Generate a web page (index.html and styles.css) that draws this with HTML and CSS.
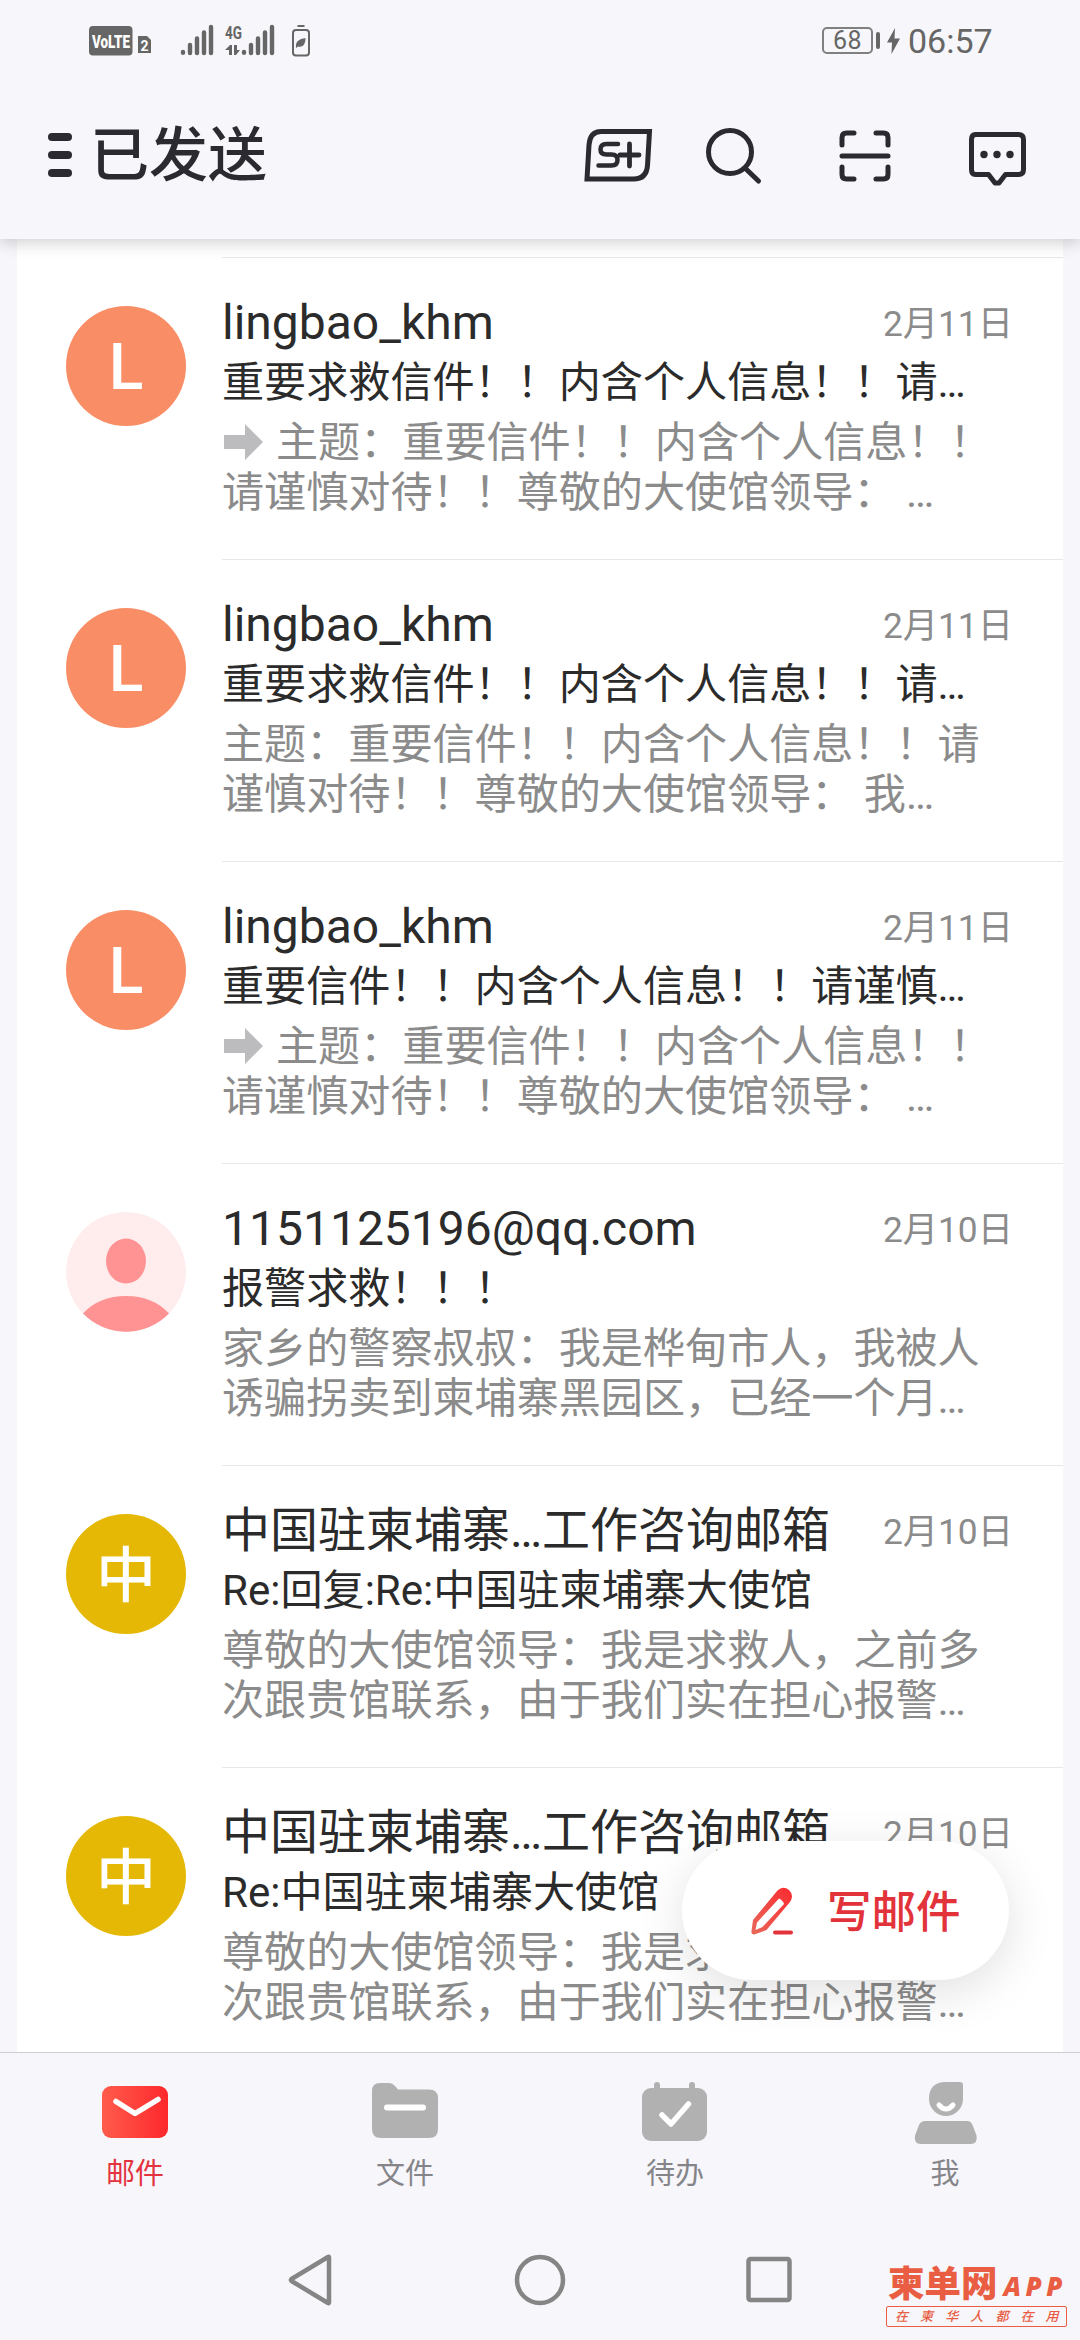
FILE: index.html
```html
<!DOCTYPE html>
<html lang="zh-CN">
<head>
<meta charset="utf-8">
<title>已发送</title>
<link rel="stylesheet" href="styles.css">
</head>
<body>
<div class="screen">
  <div class="status">
    <svg class="status-left" width="230" height="80" viewBox="80 0 230 80">
      <rect x="89" y="26" width="43.500" height="29.500" rx="4" fill="#666"/>
      <text x="92" y="48" class="volte" textLength="38" lengthAdjust="spacingAndGlyphs">VoLTE</text>
      <path d="M138 36h9l4 4v13h-13z" fill="#666"/>
      <text x="140.500" y="51" class="sim" textLength="8" lengthAdjust="spacingAndGlyphs">2</text>
      <g stroke="#666" stroke-width="4.400" stroke-linecap="round">
        <path d="M183 52v.8M190 45v8M197 38.500v14.500M204 32.500v20.500M211 27v26"/>
        <path d="M244 52v.8M251 45v8M258 38.500v14.500M265 32.500v20.500M272 27v26"/>
      </g>
      <text x="225" y="38.500" class="net" textLength="17" lengthAdjust="spacingAndGlyphs">4G</text>
      <path d="M225 50l5-5h2v10h-3v-5zM234 45h3v5h3l-4 5h-2z" fill="#666"/>
      <rect x="293" y="30" width="16" height="25.500" rx="3" fill="none" stroke="#666" stroke-width="2"/>
      <path d="M297.500 26h7" stroke="#666" stroke-width="2"/>
      <path d="M296 48c-1-8 5-9 9.500-10 0 5-2 10-7.500 8.500z" fill="#666"/>
    </svg>
    <div class="status-right">
      <span class="battery">68</span><span class="nub"></span>
      <svg width="13" height="26" viewBox="0 0 13 26"><path d="M8 0L0 14.500h5L4.500 26 13 10.500H7.500z" fill="#666"/></svg>
      <span class="time">06:57</span>
    </div>
  </div>

  <header class="header">
    <div class="menu"><i></i><i></i><i></i></div>
    <h1>已发送</h1>
    <svg class="tools" width="450" height="66" viewBox="580 121 450 66" fill="none" stroke="#2b2a30" stroke-width="5" stroke-linecap="round" stroke-linejoin="round">
      <path d="M600 130.500h48.500l-2 34q-1 13.500-14 13.500h-46.500l2-34q1-13.500 12-13.500z" stroke-linejoin="miter"/>
      <path d="M617 143h-11.500q-6 0-6 5.500 0 5 6 5h5q6 0 6 5.500t-6 5.500h-13" stroke-width="4.500"/>
      <path d="M628.500 143v22M619 154h19" stroke-width="4.800"/>
      <circle cx="729" cy="151" r="21.500"/><path d="M745 168l12.500 12"/>
      <path d="M853 132h-7.500q-4.500 0-4.500 4.500v7.500M875 132h7.500q4.500 0 4.500 4.500v7.500M853 178h-7.500q-4.500 0-4.500-4.500v-7.500M875 178h7.500q4.500 0 4.500-4.500v-7.500M841 155h46"/>
      <path d="M974.500 133.500h43q5 0 5 5v30q0 5-5 5h-13l-6.500 8.500h-4l-6.500-8.500h-13q-4 0-4-5v-30q0-5 4-5z"/>
      <g fill="#2b2a30" stroke="none"><circle cx="983" cy="153.500" r="3.700"/><circle cx="996" cy="153.500" r="3.700"/><circle cx="1009" cy="153.500" r="3.700"/></g>
    </svg>
  </header>

  <main class="main">
    <div class="list">
      <article class="mail">
        <div class="avatar orange">L</div>
        <div class="body">
          <div class="top"><span class="sender">lingbao_khm</span><time>2月11日</time></div>
          <div class="subject">重要求救信件！！内含个人信息！！请…</div>
          <p class="preview"><svg class="arrow" width="42" height="36" viewBox="0 0 42 36"><path d="M2 11h21V0l18 18-18 18V25H2z" fill="#bcbcbf"/></svg>主题：重要信件！！内含个人信息！！<br>请谨慎对待！！尊敬的大使馆领导： …</p>
        </div>
      </article>
      <article class="mail">
        <div class="avatar orange">L</div>
        <div class="body">
          <div class="top"><span class="sender">lingbao_khm</span><time>2月11日</time></div>
          <div class="subject">重要求救信件！！内含个人信息！！请…</div>
          <p class="preview">主题：重要信件！！内含个人信息！！请<br>谨慎对待！！尊敬的大使馆领导： 我…</p>
        </div>
      </article>
      <article class="mail">
        <div class="avatar orange">L</div>
        <div class="body">
          <div class="top"><span class="sender">lingbao_khm</span><time>2月11日</time></div>
          <div class="subject">重要信件！！内含个人信息！！请谨慎…</div>
          <p class="preview"><svg class="arrow" width="42" height="36" viewBox="0 0 42 36"><path d="M2 11h21V0l18 18-18 18V25H2z" fill="#bcbcbf"/></svg>主题：重要信件！！内含个人信息！！<br>请谨慎对待！！尊敬的大使馆领导： …</p>
        </div>
      </article>
      <article class="mail">
        <svg class="avatar" viewBox="0 0 120 120">
          <circle cx="60" cy="60" r="60" fill="#ffecec"/>
          <ellipse cx="60" cy="49" rx="20" ry="22.500" fill="#ff9292"/>
          <path d="M17 101.500Q33 84 60 84t43 17.500A60 60 0 0 1 17 101.500z" fill="#ff9292"/>
        </svg>
        <div class="body">
          <div class="top"><span class="sender">1151125196@qq.com</span><time>2月10日</time></div>
          <div class="subject">报警求救！！！</div>
          <p class="preview">家乡的警察叔叔：我是桦甸市人，我被人<br>诱骗拐卖到柬埔寨黑园区，已经一个月…</p>
        </div>
      </article>
      <article class="mail">
        <div class="avatar gold">中</div>
        <div class="body">
          <div class="top"><span class="sender">中国驻柬埔寨…工作咨询邮箱</span><time>2月10日</time></div>
          <div class="subject">Re:回复:Re:中国驻柬埔寨大使馆</div>
          <p class="preview">尊敬的大使馆领导：我是求救人，之前多<br>次跟贵馆联系，由于我们实在担心报警…</p>
        </div>
      </article>
      <article class="mail">
        <div class="avatar gold">中</div>
        <div class="body">
          <div class="top"><span class="sender">中国驻柬埔寨…工作咨询邮箱</span><time>2月10日</time></div>
          <div class="subject">Re:中国驻柬埔寨大使馆</div>
          <p class="preview">尊敬的大使馆领导：我是求救人，之前多<br>次跟贵馆联系，由于我们实在担心报警…</p>
        </div>
      </article>
    </div>
    <button class="compose">
      <svg width="42" height="48" viewBox="0 0 42 48">
        <defs><linearGradient id="pen" x1="1" y1="0" x2="0" y2="1"><stop offset="0" stop-color="#fb2a30"/><stop offset="1" stop-color="#e8685a"/></linearGradient></defs>
        <path fill="url(#pen)" fill-rule="evenodd" d="M26.500 3.500Q32-1.500 38 3q5.500 5.500 1 12L15.500 43 4 47.300Q0 48 .5 44L2 33zM28 11.500L6 35.500 4.500 43l7-3L33 17q-1-3.500-5-5.500z"/>
        <path d="M24 45.500h16" stroke="#e3333a" stroke-width="4" stroke-linecap="round"/>
      </svg>
      <span>写邮件</span>
    </button>
  </main>

  <nav class="tabs">
    <a class="tab active">
      <svg width="66" height="64" viewBox="0 0 66 64">
        <defs><linearGradient id="env" x1="0" y1="0" x2="1" y2="0"><stop offset="0" stop-color="#ff5c4c"/><stop offset="1" stop-color="#fd282c"/></linearGradient></defs>
        <rect y="5" width="66" height="52" rx="9" fill="url(#env)"/>
        <path d="M14 20.500l19 12 23-14" fill="none" stroke="#fff" stroke-width="5.500" stroke-linecap="round" stroke-linejoin="round"/>
      </svg><span>邮件</span></a>
    <a class="tab">
      <svg width="66" height="64" viewBox="0 0 66 64">
        <path d="M0 10q0-8 8-8h9q3.500 0 6 3l3 3.500h31q9 0 9 9V48q0 9-9 9H9q-9 0-9-9z" fill="#b1b1b1"/>
        <path d="M15 26.500h36" stroke="#fff" stroke-width="6" stroke-linecap="round"/>
      </svg><span>文件</span></a>
    <a class="tab">
      <svg width="66" height="64" viewBox="0 0 66 64">
        <rect y="7" width="65" height="53" rx="9" fill="#b1b1b1"/>
        <path d="M15 4v6M50 4v6" stroke="#b1b1b1" stroke-width="6" stroke-linecap="round"/>
        <path d="M20 34l9 9 17.500-20" fill="none" stroke="#fff" stroke-width="5.500" stroke-linecap="round" stroke-linejoin="round"/>
      </svg><span>待办</span></a>
    <a class="tab">
      <svg width="66" height="64" viewBox="0 0 66 64">
        <path d="M34 1h14q3 0 3 3v14a17 17 0 1 1-34 0Q17 1 34 1z" fill="#b1b1b1"/>
        <path d="M27 24q7 8 14 0" fill="none" stroke="#fff" stroke-width="5" stroke-linecap="round"/>
        <path d="M13 40h42q4 0 5.500 4l4 10.500q1.500 8.500-6 8.500H9Q1.500 63 3 54.500L7 44q2-4 6-4z" fill="#b1b1b1"/>
      </svg><span>我</span></a>
  </nav>

  <footer class="nav">
    <svg width="50" height="54" viewBox="0 0 50 54" fill="none" stroke="#858585" stroke-width="4.500" stroke-linejoin="round"><path d="M43 4.500v45q0 1-1 .5L5.500 28q-1-1 0-2L42 4q1-.5 1 .5z"/></svg>
    <svg width="54" height="54" viewBox="0 0 54 54" fill="none" stroke="#858585" stroke-width="4.500"><circle cx="27" cy="27" r="23"/></svg>
    <svg width="50" height="54" viewBox="0 0 50 54" fill="none" stroke="#858585" stroke-width="4.500"><rect x="4.500" y="6" width="41" height="41" rx="2"/></svg>
    <div class="stamp">
      <div class="stamp-name">柬单网<em>APP</em></div>
      <div class="stamp-note">在柬华人都在用</div>
    </div>
  </footer>
</div>
</body>
</html>
```
FILE: styles.css
```css
* { box-sizing: border-box; }

body {
  margin: 0;
  background: #f6f6fb;
  color: #2b2b2b;
  font-family: Roboto, "Noto Sans CJK SC", sans-serif;
  text-spacing-trim: space-all;
}

svg { display: block; flex: none; }

.screen {
  width: 1080px;
  height: 2340px;
  display: flex;
  flex-direction: column;
  overflow: hidden;
}

/* Status bar */
.status {
  height: 80px;
  flex: none;
  display: flex;
  justify-content: space-between;
  padding: 0 89px 0 80px;
}
.volte { font: 900 19px Roboto, sans-serif; fill: #fff; }
.sim { font: 700 15px Roboto, sans-serif; fill: #fff; }
.net { font: 700 18px Roboto, sans-serif; fill: #666; }
.status-right {
  height: 81px;
  display: flex;
  align-items: center;
  color: #666;
}
.battery {
  width: 51px;
  height: 27px;
  border: 2px solid #808080;
  border-radius: 5px;
  font-size: 25px;
  line-height: 24px;
  letter-spacing: .5px;
  text-align: center;
}
.nub {
  width: 4px;
  height: 17px;
  margin: 0 7px 0 3px;
  border-radius: 2px;
  background: #666;
}
.time {
  width: 83px;
  margin-left: 8px;
  font-size: 34px;
  line-height: 40px;
  white-space: nowrap;
}

/* Title bar */
.header {
  position: relative;
  z-index: 2;
  height: 159px;
  flex: none;
  display: flex;
  align-items: center;
  padding: 0 49px 10px 48px;
  background: #f6f6fb;
  box-shadow: 0 3px 16px rgba(0, 0, 0, .2);
  clip-path: inset(0 0 -30px 0);
}
.menu { display: flex; flex-direction: column; gap: 10px; }
.menu i { width: 24px; height: 8px; border-radius: 4px; background: #2b2a30; }
h1 {
  margin: 0 auto 0 18px;
  padding-top: 3px;
  font-size: 59px;
  font-weight: 500;
  line-height: 70px;
  color: #2b2a30;
}

/* Mail list */
.main {
  position: relative;
  height: 1813px;
  flex: none;
  padding: 18px 17px 0;
  overflow: hidden;
}
.main::before {
  content: "";
  position: absolute;
  inset: 0 17px;
  background: #fff;
}
.list { position: relative; }
.mail {
  height: 302px;
  display: flex;
  gap: 36px;
  padding-left: 49px;
}
.avatar {
  width: 120px;
  height: 120px;
  flex: none;
  margin-top: 49px;
  border-radius: 50%;
  color: #fff;
  font-size: 64px;
  font-weight: 500;
  line-height: 124px;
  text-align: center;
}
.orange { background: #f98e66; }
.gold { background: #e4b804; font-size: 60px; line-height: 126px; }
.body {
  flex: 1;
  padding: 36px 50px 0 0;
  border-top: 1px solid #e8e8ea;
}
.top {
  height: 58px;
  display: flex;
  justify-content: space-between;
  align-items: center;
}
.sender { font-size: 48px; line-height: 58px; white-space: nowrap; }
time { margin-top: 1px; font-size: 35.300px; line-height: 44px; color: #8b8b8b; }
.subject {
  height: 52px;
  margin-top: 5px;
  font-size: 42.100px;
  line-height: 52px;
  white-space: nowrap;
}
.preview {
  margin: 9px 0 0;
  font-size: 42.100px;
  line-height: 50px;
  color: #8b8b8b;
  white-space: nowrap;
}
.arrow { display: inline-block; margin-right: 12px; vertical-align: -3px; }

.compose {
  position: absolute;
  right: 71px;
  bottom: 72px;
  width: 327px;
  height: 139px;
  display: flex;
  align-items: center;
  gap: 34px;
  padding: 0 0 0 69px;
  border: 0;
  border-radius: 70px;
  background: #fff;
  box-shadow: 0 12px 48px rgba(0, 0, 0, .12);
  color: #e3333a;
  font: 500 44.500px/60px Roboto, "Noto Sans CJK SC", sans-serif;
}
.compose span { padding-top: 4px; }

/* Bottom tabs */
.tabs {
  height: 158px;
  flex: none;
  display: flex;
  border-top: 1px solid #d0d0d4;
}
.tab {
  flex: 1;
  display: flex;
  flex-direction: column;
  align-items: center;
  gap: 9px;
  padding-top: 28px;
  font-size: 29px;
  line-height: 40px;
  color: #858589;
}
.active { color: #e3333f; }

/* System navigation */
.nav {
  position: relative;
  flex: 1;
  display: flex;
  justify-content: center;
  gap: 177px;
  padding-top: 43px;
}
.stamp {
  position: absolute;
  right: 13px;
  bottom: 13px;
  width: 181px;
  color: #e95d43;
  font-weight: 900;
}
.stamp-name {
  display: flex;
  align-items: center;
  justify-content: space-between;
  padding-left: 2px;
  font-size: 36.500px;
  line-height: 40px;
}
.stamp-name em {
  padding-top: 3px;
  font: italic 800 26px/40px "Open Sans", sans-serif;
  letter-spacing: 4.500px;
}
.stamp-note {
  height: 21px;
  padding-left: 8px;
  border: 1px solid #e95d43;
  border-radius: 2px;
  font-size: 13px;
  font-style: italic;
  font-weight: 500;
  line-height: 20px;
  letter-spacing: 12.100px;
  white-space: nowrap;
}
```
